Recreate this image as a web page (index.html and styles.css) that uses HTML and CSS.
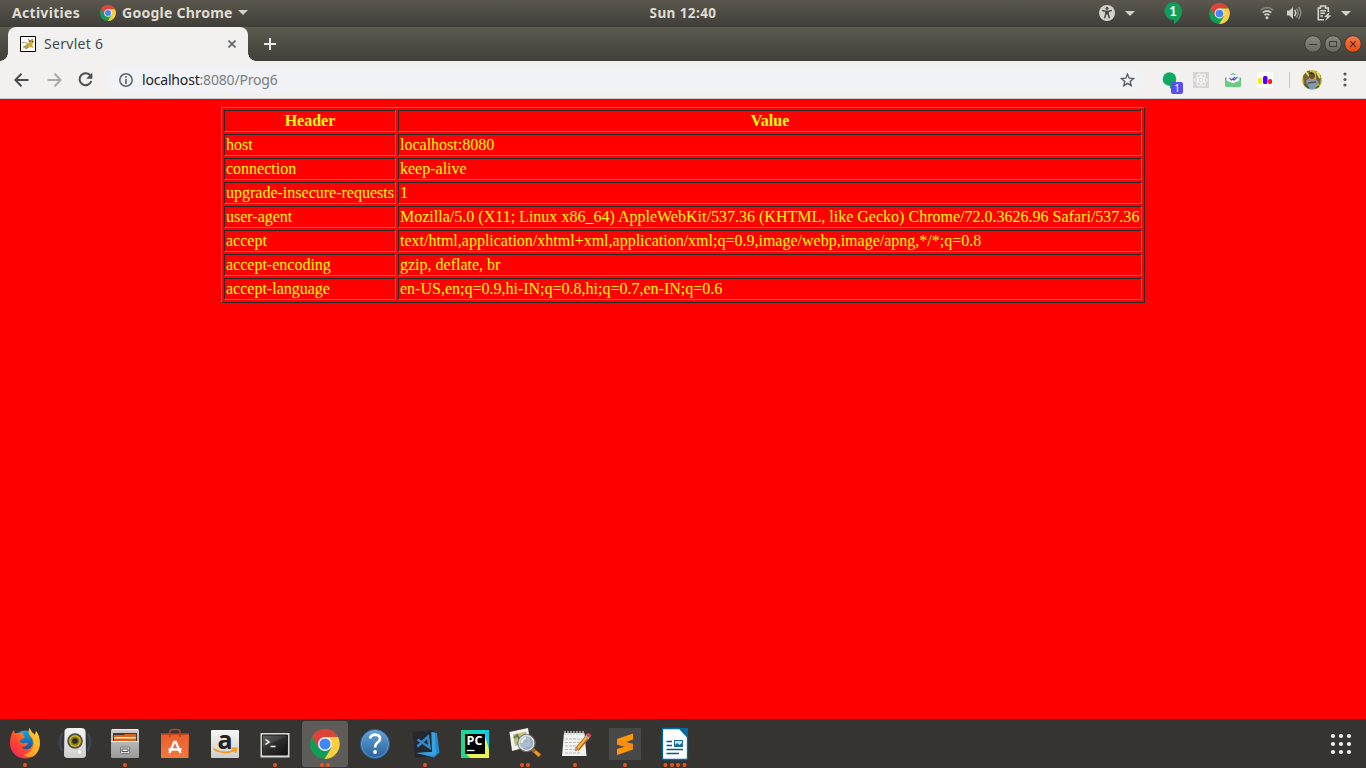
FILE: index.html
```html
<!DOCTYPE html>
<html lang="en">
<head>
<meta charset="utf-8">
<title>Servlet 6</title>
<link rel="stylesheet" href="styles.css">
</head>
<body>
<svg class="defs" width="0" height="0" aria-hidden="true">
  <symbol id="chrome" viewBox="0 0 30 30">
    <circle cx="15" cy="15" r="15" fill="#109d58"/>
    <path d="M2 7.5A15 15 0 0 1 28 7.500V8H15L8.500 19Z" fill="#db4437"/>
    <path d="M28 8A15 15 0 0 1 14.500 30L21.500 18.800L15 8Z" fill="#ffcd40"/>
    <circle cx="15" cy="15" r="7" fill="#f1f1f1"/>
    <circle cx="15" cy="15" r="5.500" fill="#4285f4"/>
  </symbol>
  <linearGradient id="fox" x1="0" y1="1" x2="1" y2="0"><stop offset="0" stop-color="#ed1868"/><stop offset=".4" stop-color="#ff4a2c"/><stop offset=".75" stop-color="#ff9e20"/><stop offset="1" stop-color="#fff44f"/></linearGradient>
  <linearGradient id="globe" x1="0" y1="0" x2="0" y2="1"><stop offset="0" stop-color="#09a9ed"/><stop offset="1" stop-color="#20387f"/></linearGradient>
  <linearGradient id="silver" x1="0" y1="0" x2="0" y2="1"><stop offset="0" stop-color="#f6f6f6"/><stop offset="1" stop-color="#cdcdcd"/></linearGradient>
  <linearGradient id="cabinet" x1="0" y1="0" x2="0" y2="1"><stop offset="0" stop-color="#cecece"/><stop offset="1" stop-color="#999"/></linearGradient>
  <linearGradient id="bag" x1="0" y1="0" x2="0" y2="1"><stop offset="0" stop-color="#e95d2c"/><stop offset="1" stop-color="#f4773f"/></linearGradient>
  <linearGradient id="screen" x1="0" y1="0" x2="1" y2="1"><stop offset="0" stop-color="#555"/><stop offset=".5" stop-color="#2b2b2b"/><stop offset="1" stop-color="#111"/></linearGradient>
  <linearGradient id="blue" x1="0" y1="0" x2="0" y2="1"><stop offset="0" stop-color="#65a2d7"/><stop offset="1" stop-color="#29619b"/></linearGradient>
  <linearGradient id="pyc" x1="0" y1="0" x2="1" y2="0"><stop offset="0" stop-color="#21d789"/><stop offset=".6" stop-color="#18d4bd"/><stop offset="1" stop-color="#07c3f2"/></linearGradient>
  <linearGradient id="close" x1="0" y1="0" x2="0" y2="1"><stop offset="0" stop-color="#f67b4b"/><stop offset="1" stop-color="#e84a0c"/></linearGradient>
  <linearGradient id="button" x1="0" y1="0" x2="0" y2="1"><stop offset="0" stop-color="#8c8b83"/><stop offset="1" stop-color="#696860"/></linearGradient>
</svg>

<header class="panel">
  <div class="panel-left">
    <span class="activities">Activities</span>
    <svg class="panel-chrome" width="16" height="16"><use href="#chrome"/></svg>
    <span class="app-name">Google Chrome</span>
    <svg class="caret" width="10" height="5"><path d="M0 0H10L5 5Z"/></svg>
  </div>
  <span class="clock">Sun 12:40</span>
  <div class="tray">
    <svg width="16" height="16" viewBox="0 0 16 16"><circle cx="8" cy="8" r="8" fill="#d5d3cf"/><circle cx="8" cy="3.300" r="1.500" fill="#4c4942"/><path d="M3.200 5.400L7 6.200H9L12.800 5.400M8 6.200V9.500M6.800 6.500V9L5.600 13.200M9.200 6.500V9L10.400 13.200" fill="none" stroke="#4c4942" stroke-width="1.500"/></svg>
    <svg class="caret caret-access" width="10" height="5"><path d="M0 0H10L5 5Z"/></svg>
    <svg class="tray-hangouts" width="18" height="22" viewBox="0 0 18 22"><path d="M9 0A9 9 0 0 1 18 9C18 15 14 19.500 10 22V18A9 9 0 0 1 9 0Z" fill="#109d58"/><text x="9" y="13.500" class="tray-count">1</text></svg>
    <svg class="tray-chrome" width="21" height="21"><use href="#chrome"/></svg>
    <svg class="tray-wifi" width="14" height="14" viewBox="0 0 14 14" fill="none" stroke="#d2cfc9" stroke-width="1.700"><path d="M.7 4.200Q7-.8 13.300 4.200" opacity=".4"/><path d="M2.700 6.700Q7 3.300 11.300 6.700"/><path d="M4.500 9.100Q7 7.200 9.500 9.100"/><circle cx="7" cy="11.800" r="1.100" fill="#d2cfc9" stroke-width="1"/></svg>
    <svg class="tray-volume" width="16" height="14" viewBox="0 0 16 14"><path d="M1 4.500H3.500L7 1V13L3.500 9.500H1Z" fill="#d2cfc9"/><path d="M8.500 4Q11 7 8.500 10" fill="none" stroke="#d2cfc9" stroke-width="1.500"/><path d="M10.500 2.500Q14 7 10.500 11.500M12.500 1Q17 7 12.500 13" fill="none" stroke="#8f8c85" stroke-width="1.300"/></svg>
    <svg class="tray-battery" width="15" height="16" viewBox="0 0 15 16" fill="none" stroke="#d5d3cf" stroke-width="1.600"><path d="M7 14.700H1.300V3H3.500V1H8.500V3H11.300V7M3.300 5.700H9M3.300 8.300H8M3.300 11H6"/><path d="M12.500 7L7 12H10L8 16L14.500 10.500H11.500Z" fill="#d5d3cf" stroke="none"/></svg>
    <svg class="caret caret-system" width="10" height="5"><path d="M0 0H10L5 5Z"/></svg>
  </div>
</header>

<div class="tabstrip">
  <div class="tab">
    <svg width="16" height="16" viewBox="0 0 16 16"><path d="M.5.500H15.500V15.500H.5Z" fill="#fff" stroke="#000"/><path d="M2 13L4 11L7 8L9 7L8 3L10 4L13 3L14 6L12 9L14 12L10 11L7 13L4 12Z" fill="#cfac42"/><path d="M2 7L5 6L8 8L6 10L3 11M8 3L10 5L13 3M5 13L8 11" fill="none" stroke="#7b7159" stroke-width=".7"/><path d="M9.500 5.500H10.500M12 5.500H13" stroke="#413b28"/></svg>
    <span class="tab-title">Servlet 6</span>
    <svg class="tab-close" width="8" height="8" viewBox="0 0 8 8"><path d="M.5.500L7.500 7.500M7.500.5L.5 7.500" stroke="#5f6368" stroke-width="1.600"/></svg>
  </div>
  <svg class="new-tab" width="12" height="12"><path d="M6 0V12M0 6H12" stroke="#e9e8e4" stroke-width="2"/></svg>
  <div class="window-buttons">
    <svg width="18" height="18"><circle cx="9" cy="9" r="8.300" fill="url(#button)" stroke="#3a3934"/><path d="M5 9.500H13" stroke="#3b3a35"/></svg>
    <svg width="18" height="18"><circle cx="9" cy="9" r="8.300" fill="url(#button)" stroke="#3a3934"/><path d="M5.500 6.500H12.500V11.500H5.500Z" fill="none" stroke="#3b3a35"/></svg>
    <svg width="18" height="18"><circle cx="9" cy="9" r="8.300" fill="url(#close)" stroke="#3a3934"/><path d="M6.200 6.200L11.800 11.800M11.800 6.200L6.200 11.800" stroke="#51270f" stroke-width="1.200"/></svg>
  </div>
</div>

<div class="toolbar">
  <svg class="back" width="15" height="14" viewBox="0 0 15 14"><path d="M14.500 7H1.500M7.500.8L1.300 7L7.500 13.200" fill="none" stroke="#4b4c4e" stroke-width="2"/></svg>
  <svg class="forward" width="15" height="14" viewBox="0 0 15 14"><path d="M.5 7H13.500M7.500.8L13.700 7L7.500 13.200" fill="none" stroke="#aaa9a9" stroke-width="2"/></svg>
  <svg class="reload" width="15" height="15" viewBox="0 0 15 15"><path d="M12.500 3.800A6 6 0 1 0 13.300 9" fill="none" stroke="#4b4c4e" stroke-width="2"/><path d="M14.300.5V6.700H8.200Z" fill="#4b4c4e"/></svg>
  <div class="omnibox">
    <svg width="14" height="14" viewBox="0 0 14 14"><circle cx="7" cy="7" r="6.200" fill="none" stroke="#5f6368" stroke-width="1.500"/><path d="M7 3V4.700M7 6V11" stroke="#5f6368" stroke-width="1.700"/></svg>
    <span class="url"><b class="host">localhost</b>:8080/Prog6</span>
    <svg class="star" width="15" height="14" viewBox="0 0 15 14"><path d="M7.500 1.300L9.200 5.200L13.500 5.600L10.200 8.400L11.200 12.700L7.500 10.400L3.800 12.700L4.800 8.400L1.500 5.600L5.800 5.200Z" fill="none" stroke="#5a5d61" stroke-width="1.400"/></svg>
  </div>
  <div class="extensions">
    <svg width="22" height="23" viewBox="0 0 22 23"><circle cx="7.500" cy="8" r="6.800" fill="#0daa62"/><path d="M8 13H12L8 18Z" fill="#0daa62"/><rect x="9" y="11" width="12" height="12" rx="2" fill="#584ef3"/><text x="15" y="20.500" class="badge-count">1</text></svg>
    <svg class="ext-react" width="16" height="16" viewBox="0 0 16 16"><rect width="16" height="16" fill="#d5d5d3"/><g fill="none" stroke="#f7f7f7"><ellipse cx="8" cy="8" rx="6.500" ry="2.600"/><ellipse cx="8" cy="8" rx="6.500" ry="2.600" transform="rotate(60 8 8)"/><ellipse cx="8" cy="8" rx="6.500" ry="2.600" transform="rotate(120 8 8)"/></g><circle cx="8" cy="8" r="1.200" fill="#fff"/></svg>
    <svg class="ext-mail" width="16" height="16" viewBox="0 0 16 16"><path d="M0 6L8 1L16 6V13Q16 15 14 15H2Q0 15 0 13Z" fill="#4bbd70"/><path d="M1.500 4Q8 1 14.500 4V9L8 11.500L1.500 9Z" fill="#f4f4ff"/><path d="M0 8L8 11.500L16 8V13Q16 15 14 15H2Q0 15 0 13Z" fill="#68cf82"/><path d="M4.500 6L6.500 8L10 5M8 7.200L9 8L12.500 5" fill="none" stroke="#634ab5" stroke-width="1.100"/></svg>
    <svg class="ext-bars" width="16" height="16"><path d="M0 0H16V16H0Z" fill="#fff"/><rect x="1" y="6" width="4" height="6" rx="1.500" fill="#f4ef00"/><rect x="6" y="4" width="4.500" height="8" rx="1.500" fill="#5000ff"/><rect x="11" y="7" width="4" height="5" rx="1.500" fill="#fd1b21"/></svg>
    <span class="divider"></span>
    <svg class="avatar" width="20" height="20" viewBox="0 0 20 20"><circle cx="10" cy="10" r="10" fill="#c9b92c"/><path d="M1 6L5 1L8 .5L6 18L2 15ZM14 1L19 6L18 15L14 12Z" fill="#716534"/><path d="M4 2L7 6M15 2L18 8" stroke="#eee74b" stroke-width="2"/><circle cx="10" cy="6" r="3" fill="#6e4a38"/><path d="M6.500 5Q9-1 13 5Q9 2 6.500 5" fill="#272727"/><path d="M4 12Q5 8 8 9H12Q15 9 17 13L14 16V19H6V15Z" fill="#8298b5"/><path d="M6 13L14 12" stroke="#6e4a38" stroke-width="1.500"/><path d="M3 15L7 18M14 18L17 16" stroke="#3d6635" stroke-width="2"/></svg>
    <svg class="menu" width="4" height="15"><g fill="#5a5a5a"><circle cx="2" cy="2" r="1.600"/><circle cx="2" cy="7.500" r="1.600"/><circle cx="2" cy="13" r="1.600"/></g></svg>
  </div>
</div>

<main class="page">
  <table class="headers">
    <colgroup><col class="col-name"><col></colgroup>
    <tr><th>Header</th><th>Value</th></tr>
    <tr><td>host</td><td>localhost:8080</td></tr>
    <tr><td>connection</td><td>keep-alive</td></tr>
    <tr><td>upgrade-insecure-requests</td><td>1</td></tr>
    <tr><td>user-agent</td><td class="agent">Mozilla/5.0 (X11; Linux x86_64) AppleWebKit/537.36 (KHTML, like Gecko) Chrome/72.0.3626.96 Safari/537.36</td></tr>
    <tr><td>accept</td><td>text/html,application/xhtml+xml,application/xml;q=0.9,image/webp,image/apng,*/*;q=0.8</td></tr>
    <tr><td>accept-encoding</td><td>gzip, deflate, br</td></tr>
    <tr><td>accept-language</td><td>en-US,en;q=0.9,hi-IN;q=0.8,hi;q=0.7,en-IN;q=0.6</td></tr>
  </table>
</main>

<footer class="dock">
  <svg width="50" height="49"><circle cx="25" cy="23" r="11.500" fill="url(#globe)"/><path d="M10 24Q10 16 14 11L15 14.500Q17 13 19 14.500Q20.500 13 23.500 13.500Q22 16 25 18L22 20.500Q19.500 20.500 20 23Q23 25 26 23.500L28 24.500Q26 28.500 21.500 28Q25 32 30.500 29Q34.500 25 32 19.500Q29 17 28.500 13Q28.500 11 29.500 9Q31 13 35 16L36 12Q40 17 40 25A15 15 0 0 1 10 24Z" fill="url(#fox)"/><path d="M29.500 9Q27.500 14 31.500 18Q36 23 32 30Q29 35 23 36Q34 42 38.500 31Q41.500 20 36 12L35 16Q31 13 29.500 9Z" fill="#ffd12e" opacity=".65"/><circle class="run" cx="25" cy="46" r="2"/></svg>
  <svg width="50" height="49"><path d="M12 14Q8 22 12 32M38 14Q42 22 38 32" fill="none" stroke="#3a4a5a" stroke-width="2.200"/><path d="M9.500 18Q8 23 9.500 28M40.500 18Q42 23 40.500 28" fill="none" stroke="#37424c"/><path d="M14.500 12Q15 9 19 9H31Q35 9 35.500 12L36 36Q36 39 32 39H18Q14 39 14 36Z" fill="url(#silver)"/><circle cx="25" cy="22" r="7.800" fill="#4d504d"/><circle cx="25" cy="22" r="6" fill="#d3b817"/><circle cx="25" cy="22" r="4.500" fill="#8b7b16"/><circle cx="25" cy="22" r="2.800" fill="#292b29"/><circle cx="29.500" cy="33" r="2.500" fill="#f2f2f2" stroke="#ccc"/></svg>
  <svg width="50" height="49"><rect x="11" y="10" width="28" height="29" rx="1.500" fill="url(#cabinet)"/><path d="M12 10.500H38" stroke="#eee"/><path d="M13 14H37V22H13Z" fill="#463830"/><path d="M14 16H24L25 15H36V22H14Z" fill="#dd621e"/><path d="M14 18H36V22H14Z" fill="#f2a565"/><path d="M15 18.500H35" stroke="#fff0d8"/><path d="M14 20H36V22H14Z" fill="#d56423"/><path d="M11 22.500H39" stroke="#eee"/><rect x="20.500" y="28" width="9" height="6.500" rx="1" fill="#ddd" stroke="#777"/><path d="M22 30H28V32.500H22Z" fill="#f6f6f6" stroke="#555"/><circle class="run" cx="25" cy="46" r="2"/></svg>
  <svg width="50" height="49"><path d="M11 15H39L38.500 39H11Z" fill="url(#bag)"/><path d="M11 15H39M20 18V13Q20 10.500 23 10.500H27Q30 10.500 30 13V18" fill="none" stroke="#b4431f" stroke-width="1.700"/><path d="M19.500 34L24.200 23H25.800L30.500 34M18.500 30.500H31.500" fill="none" stroke="#fff" stroke-width="2.300"/></svg>
  <svg width="50" height="49"><rect x="11" y="11" width="28" height="28" rx="1" fill="url(#silver)"/><text x="25" y="29.500" class="amazon-letter">a</text><path d="M13.500 30Q24 36.500 35 31M31.500 29.500L36.500 29.500L35.500 34" fill="none" stroke="#f59a1c" stroke-width="1.800"/></svg>
  <svg width="50" height="49"><path d="M10.500 14H39.500V38.500H10.500Z" fill="#d7d7d4"/><path d="M12.500 16H37.500V36H12.500Z" fill="url(#screen)" stroke="#222"/><path d="M12.500 17H37.500L12.500 28Z" fill="#fff" opacity=".08"/><path d="M15.500 20.500L19 23L15.500 25.500M20.500 27.500H25.500" fill="none" stroke="#fff" stroke-width="1.500"/><circle class="run" cx="25" cy="46" r="2"/></svg>
  <svg width="50" height="49"><rect x="2" y="2" width="46" height="46" rx="3" fill="#5e5c59"/><use href="#chrome" x="10" y="10" width="30" height="30"/><circle class="run" cx="22" cy="46" r="2"/><circle class="run" cx="28" cy="46" r="2"/></svg>
  <svg width="50" height="49"><circle cx="25" cy="25" r="14.500" fill="url(#blue)" stroke="#2b6294"/><circle cx="25" cy="25" r="13.500" fill="none" stroke="#6eaada" stroke-opacity=".6"/><path d="M20 19.500Q21 15.700 25 15.700Q30 16 30 19.500Q30 22 27 24Q25 25.500 25 28.500" fill="none" stroke="#fff" stroke-width="2.700"/><circle cx="25" cy="33" r="1.900" fill="#fff"/></svg>
  <svg width="50" height="49"><path d="M12.500 13L33 11L35 37L15 38.500Z" fill="#24272c"/><path d="M31.500 13L37 14L39.500 33.500L34 38.500L16 34L32 33Z" fill="#2489ca"/><path d="M31.500 13L35 14L36 35L33 37L16 34L32 33Z" fill="#3da0e0"/><path d="M17.500 20.500L29.500 28.500L28 17.500L17.500 27.500" fill="none" stroke="#3489c9" stroke-width="2.500"/><circle class="run" cx="25" cy="46" r="2"/></svg>
  <svg width="50" height="49"><path d="M11 11H39V39H11Z" fill="url(#pyc)"/><path d="M32 11L36 14L39 31V39H17L15 35H35V15Z" fill="#e9f453"/><path d="M33 11H39V30Z" fill="#13c6e1"/><path d="M11 29L20 39H11Z" fill="#20d789"/><path d="M15 15H35V35H15Z"/><text x="24.500" y="26" class="pycharm-text">PC</text><path d="M17 31.500H24.500" stroke="#fff" stroke-width="1.300"/></svg>
  <svg width="50" height="49"><path d="M9.500 13L28 9L31 27L12 32Z" fill="#f3f3ee"/><path d="M13 15.500L26 12.500L28 23L15 27Z" fill="#b4be8d"/><path d="M14 19L17 16L20 21M22 17L25 19L27 23M17 23L21 20L23 24" fill="none" stroke="#627a3f" stroke-width="2"/><path d="M20 15H24M16 22H19" stroke="#e5bc51" stroke-width="2"/><path d="M32 30L40 37" stroke="#9e6b26" stroke-width="4"/><path d="M35 32.500L39.500 36.500" stroke="#f49a26" stroke-width="2.500"/><circle cx="26.500" cy="24" r="7.500" fill="#a5b9cb" fill-opacity=".9" stroke="#dde0e3" stroke-width="1.600"/><circle cx="26.500" cy="24" r="8.700" fill="none" stroke="#70757a"/><path d="M21.500 24Q22 20 26 19" fill="none" stroke="#e9f1f8" stroke-width="2"/><circle class="run" cx="22" cy="46" r="2"/><circle class="run" cx="28" cy="46" r="2"/></svg>
  <svg width="50" height="49"><path d="M14 14L34.500 14L36.500 37L12 37Z" fill="#f1f1ed"/><path d="M15 20H32M15 23.500H31M15 27H29M15 30.500H28M15 34H30" stroke="#bbb" stroke-dasharray="3 1"/><path d="M15 12V16M18 12V16M21 12V16M24 12V16M27 12V16M30 12V16M33 12V16" stroke="#ccc" stroke-width="1.300"/><path d="M27 30.500L37.500 18" stroke="#ab661a" stroke-width="4.500"/><path d="M27.500 29.500L37 18" stroke="#ffae38" stroke-width="2.500"/><path d="M36.500 19L39 16" stroke="#aaa" stroke-width="4.500"/><path d="M38 17.500L40 15" stroke="#e14447" stroke-width="4"/><path d="M25 32.500L25.500 28L29 31Z" fill="#c08d63"/><circle class="run" cx="25" cy="46" r="2"/></svg>
  <svg width="50" height="49"><rect x="9" y="9" width="32" height="32" rx="1" fill="#484848"/><path d="M17 20L33 14.500V20.500L24.500 23.500L33 25V30.500L17 36V30L25.500 27.500L17 25.500Z" fill="#ff9800"/><path d="M17 20L33 25V30.500L17 25.500Z" fill="#f58b18"/><circle class="run" cx="25" cy="46" r="2"/></svg>
  <svg width="50" height="49"><path d="M13 9.500H29.500L37.500 18V39Q37.500 40.500 36 40.500H14Q12.500 40.500 12.500 39V10Z" fill="#fff" stroke="#0369a3" stroke-width="1.300"/><path d="M29.500 9H38V17.500Z" fill="#0369a3"/><path d="M16.500 22.500H22M16.500 26.500H22M16.500 30.500H33M16.500 34.500H29" stroke="#025a91" stroke-width="1.700"/><path d="M24 21H33V28H24Z" fill="#176c9b"/><path d="M25 22H32V24L29.500 26L27 24L25 26Z" fill="#cae6f5"/><g class="run"><circle cx="15.500" cy="46" r="2"/><circle cx="22" cy="46" r="2"/><circle cx="28" cy="46" r="2"/><circle cx="34.500" cy="46" r="2"/></g></svg>
  <svg class="show-apps" width="50" height="49" fill="#f2f1ef"><g id="dots"><circle cx="17" cy="17" r="2.100"/><circle cx="25" cy="17" r="2.100"/><circle cx="33" cy="17" r="2.100"/></g><use href="#dots" y="8"/><use href="#dots" y="16"/></svg>
</footer>
</body>
</html>
```
FILE: styles.css
```css
body {
  margin: 0;
  width: 1366px;
  height: 768px;
  overflow: hidden;
  display: flex;
  flex-direction: column;
  font-family: "Noto Sans", sans-serif;
}
svg { display: block; flex: none; }
.defs { position: absolute; }

.panel {
  height: 27px;
  flex: none;
  display: grid;
  grid-template-columns: 1fr 68px 1fr;
  align-items: center;
  background: linear-gradient(#5b574e, #403e39);
  color: #dfdbd2;
  font-weight: 700;
  font-size: 14px;
  line-height: 24px;
  white-space: nowrap;
}
.panel > *, .panel-left > * { margin-bottom: 1px; }
.panel-left { display: flex; align-items: center; padding-left: 12px; }
.activities { width: 88px; letter-spacing: .3px; }
.panel-chrome { margin-right: 6px; }
.app-name { width: 116px; letter-spacing: .25px; }
.caret { fill: #d5d1ca; }
.clock { text-align: center; letter-spacing: .4px; font-size: 13.5px; }
.tray { display: flex; align-items: center; justify-content: flex-end; padding-right: 15px; }
.caret-access { margin-left: 10px; }
.tray-hangouts { margin-left: 29px; }
.tray-count { font: 700 13px Lato, sans-serif; fill: #fff; text-anchor: middle; }
.tray-chrome { margin-left: 27px; }
.tray-wifi { margin-left: 30px; }
.tray-volume { margin-left: 12px; }
.tray-battery { margin-left: 15px; }
.caret-system { margin-left: 9px; }

.tabstrip {
  height: 34px;
  flex: none;
  display: flex;
  align-items: center;
  padding-left: 8px;
  background: linear-gradient(#5d5c51, #403f39);
}
.tab {
  position: relative;
  box-sizing: border-box;
  width: 240px;
  height: 34px;
  padding: 0 12px;
  display: flex;
  align-items: center;
  border-radius: 8px 8px 0 0;
  background: #f2f1f0;
}
.tab::before, .tab::after {
  content: "";
  position: absolute;
  bottom: 0;
  width: 8px;
  height: 8px;
}
.tab::before { left: -8px; background: radial-gradient(circle at 0 0, transparent 7.5px, #f2f1f0 8px); }
.tab::after { right: -8px; background: radial-gradient(circle at 100% 0, transparent 7.5px, #f2f1f0 8px); }
.tab-title { margin: 0 0 2px 8px; font-size: 14px; letter-spacing: .3px; color: #45484c; }
.tab-close { margin-left: auto; }
.new-tab { margin-left: 16px; }
.window-buttons { display: flex; gap: 2px; margin-left: auto; padding-right: 4px; }

.toolbar {
  box-sizing: border-box;
  height: 38px;
  flex: none;
  display: flex;
  align-items: center;
  padding-left: 14px;
  background: #f2f1f0;
  border-bottom: 1px solid #c8c8c6;
}
.forward { margin-left: 18px; }
.reload { margin-left: 16px; }
.omnibox {
  box-sizing: border-box;
  width: 1039px;
  height: 28px;
  margin-left: 13px;
  padding: 0 10px 0 13px;
  display: flex;
  align-items: center;
  border-radius: 14px;
  background: #f0f2f5;
}
.url { margin-left: 9px; font-size: 14px; letter-spacing: -.18px; color: #7a7d82; }
.host { font-weight: 400; color: #222326; }
.star { margin-left: auto; }
.extensions { display: flex; align-items: center; margin-left: 17px; }
.extensions > svg:first-child { margin-top: 5px; }
.badge-count { font: 10px "Noto Sans", sans-serif; fill: #fff; text-anchor: middle; }
.ext-react { margin-left: 9px; }
.ext-mail, .ext-bars { margin-left: 16px; }
.divider { width: 1px; height: 16px; margin: 0 12px 0 16px; background: #c8c8c8; }
.menu { margin-left: 20.5px; }

.page {
  flex: 1;
  padding-top: 8px;
  background: #f00;
}
.headers {
  width: 924px;
  margin: 0 auto;
  table-layout: fixed;
  border-spacing: 2px;
  border: 1px solid;
  border-color: #808080 #2c2c2c #2c2c2c #808080;
  color: #ff0;
  font: 16px/18px "Liberation Serif", serif;
  white-space: nowrap;
}
.col-name { width: 172px; }
.headers th, .headers td {
  padding: 1px;
  border: 1px solid;
  border-color: #2c2c2c #808080 #808080 #2c2c2c;
}
.headers .agent { letter-spacing: .009px; }

.dock {
  height: 49px;
  flex: none;
  display: flex;
  background: #353430;
}
.run { fill: #e95420; }
.show-apps { margin-left: auto; }
.amazon-letter { font: 700 25px "Open Sans", sans-serif; fill: #222; text-anchor: middle; }
.pycharm-text { font: 700 12.5px "Open Sans", sans-serif; fill: #fff; text-anchor: middle; }
```
